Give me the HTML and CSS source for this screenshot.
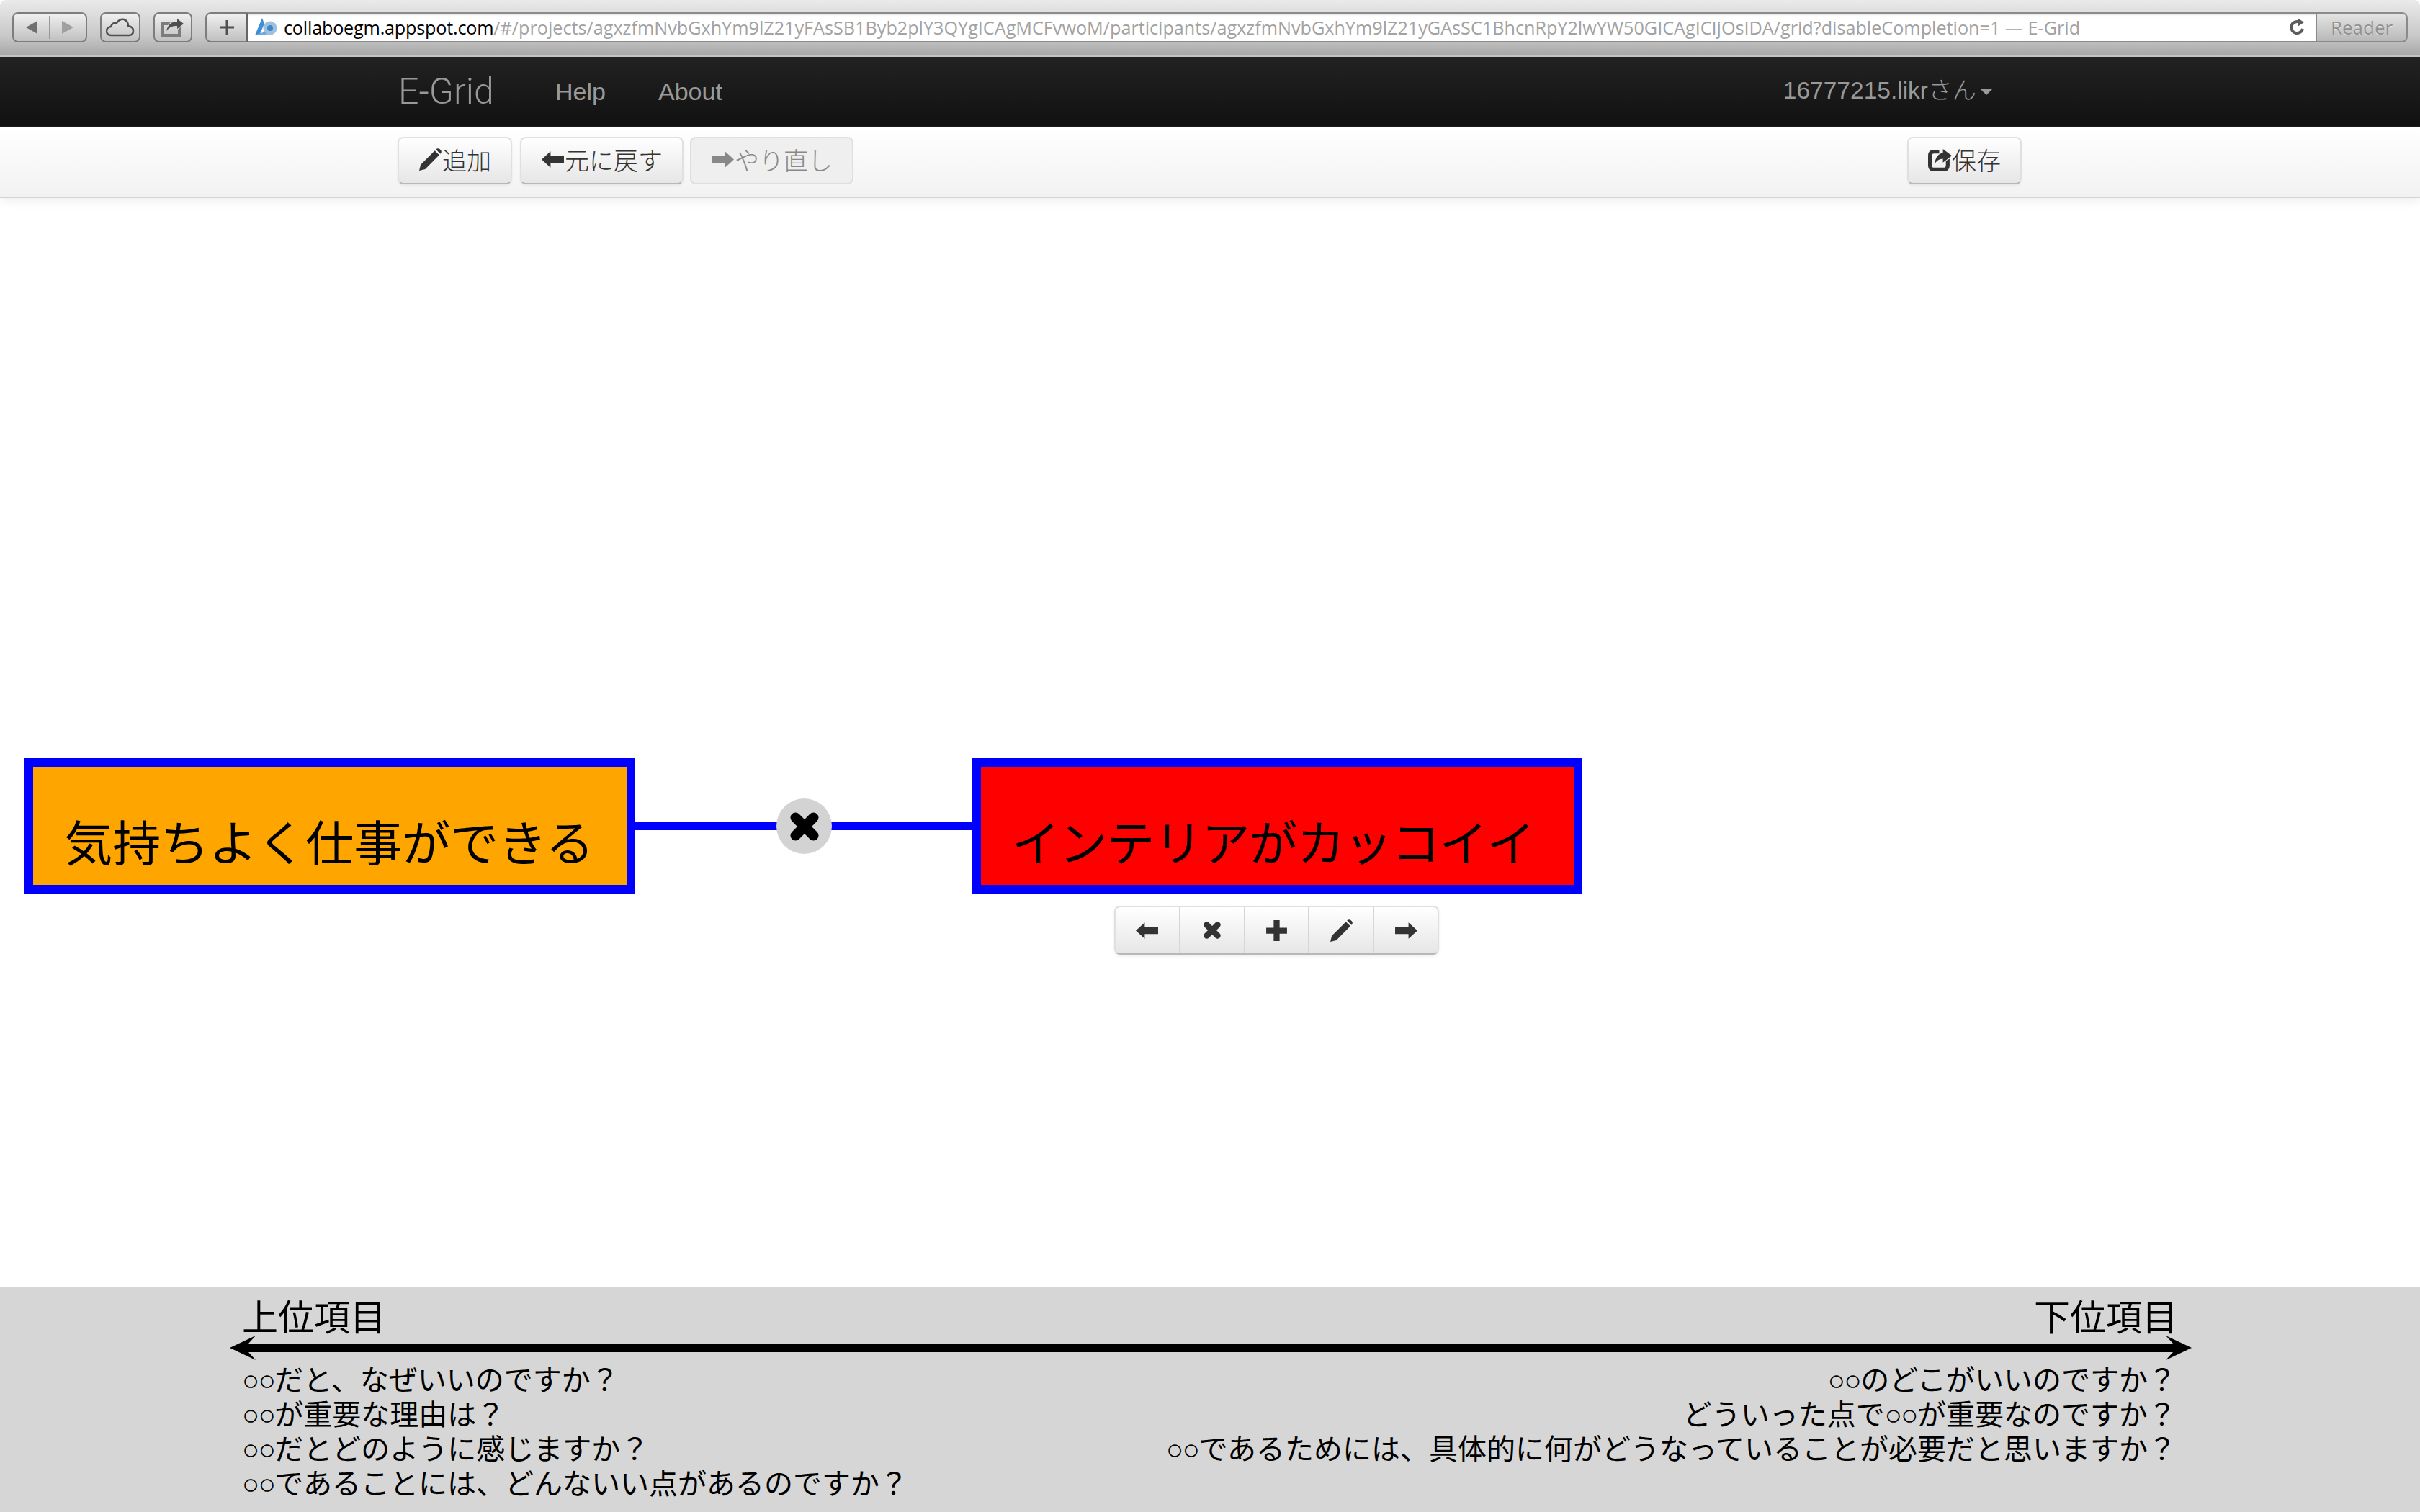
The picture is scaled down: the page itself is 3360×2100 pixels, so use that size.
FILE: index.html
```html
<!DOCTYPE html>
<html lang="ja">
<head>
<meta charset="utf-8">
<title>E-Grid</title>
<link rel="stylesheet" href="styles.css">
</head>
<body>
<svg class="sprites" width="0" height="0" aria-hidden="true">
  <symbol id="i-left" viewBox="0 0 32 32"><path d="M1 16 L13 5 V11.500 H31 V20.500 H13 V27 Z"/></symbol>
  <symbol id="i-right" viewBox="0 0 32 32"><path d="M31 16 L19 5 V11.500 H1 V20.500 H19 V27 Z"/></symbol>
  <symbol id="i-x" viewBox="0 0 32 32"><path d="M8 8 L24 24 M24 8 L8 24" fill="none" stroke="currentColor" stroke-width="9" stroke-linecap="round"/></symbol>
  <symbol id="i-plus" viewBox="0 0 32 32"><path d="M12 2 H20 V12 H30 V20 H20 V30 H12 V20 H2 V12 H12 Z"/></symbol>
  <symbol id="i-pencil" viewBox="0 0 32 32"><path d="M1 31 L3 23 L22 4 L28 10 L9 29 Z M23.500 2.500 Q26 0 28.500 2 L30 3.500 Q32 6 29.500 8.500 Z"/></symbol>
  <symbol id="i-share" viewBox="0 0 32 32"><path d="M24 18 V24 Q24 27 21 27 H8 Q5 27 5 24 V11 Q5 8 8 8 H15 V3 H8 Q0 3 0 11 V24 Q0 32 8 32 H21 Q29 32 29 24 V15 Z"/><path d="M20 2 L32 11 L20 20 V15 Q13 15 9 22 Q10 9 20 7 Z"/></symbol>
</svg>

<header class="chrome">
  <div class="chrome-btn seg">
    <svg class="tri" viewBox="0 0 18 20"><path d="M17 1 V19 L1 10 Z"/></svg>
    <span class="seg-line"></span>
    <svg class="tri tri-dim" viewBox="0 0 18 20"><path d="M1 1 V19 L17 10 Z"/></svg>
  </div>
  <div class="chrome-btn cloud">
    <svg viewBox="0 0 40 26" width="40" height="26"><path d="M8 24 Q1 24 1 18 Q1 13 7 12 Q9 6 15 7 Q19 1 25 2 Q31 4 31 11 Q38 12 38 18 Q38 24 32 24 Z" fill="none" stroke="#505050" stroke-width="2.500"/></svg>
  </div>
  <div class="chrome-btn share">
    <svg viewBox="0 0 34 26" width="34" height="26"><path d="M1 6 H14 L10 10 H5 V22 H24 V16 L28 12 V26 H1 Z" fill="#7c7c7c"/><path d="M32 8 L23 1 V5 Q11 5 8 18 Q14 10 23 11 V15 Z" fill="#505050"/></svg>
  </div>
  <div class="address">
    <div class="add-tab"><svg viewBox="0 0 20 20" width="20" height="20"><path d="M8.500 0 H11.500 V8.500 H20 V11.500 H11.500 V20 H8.500 V11.500 H0 V8.500 H8.500 Z" fill="#505050"/></svg></div>
    <div class="url">
      <svg class="favicon" viewBox="0 0 32 26" width="32" height="26"><path d="M10 0 L13 8 L7 22 L0 24 Z" fill="#3f8fd6"/><circle cx="21" cy="14" r="9.500" fill="#9dc0dc"/><circle cx="21" cy="14" r="4" fill="#3f84c4"/><path d="M0 24 H18 L14 19 Z" fill="#6fa8d8"/></svg>
      <span class="url-text"><span class="url-host">collaboegm.appspot.com</span>/#/projects/agxzfmNvbGxhYm9lZ21yFAsSB1Byb2plY3QYgICAgMCFvwoM/participants/agxzfmNvbGxhYm9lZ21yGAsSC1BhcnRpY2lwYW50GICAgICIjOsIDA/grid?disableCompletion=1 — E-Grid</span>
      <svg class="reload" viewBox="0 0 20 26" width="20" height="26"><path d="M13 6 A8 8 0 1 0 17 15" fill="none" stroke="#5c5c5c" stroke-width="4"/><path d="M10 0 L19 6 L10 12 Z" fill="#5c5c5c"/></svg>
    </div>
    <div class="reader">Reader</div>
  </div>
</header>

<nav class="navbar">
  <div class="nav-left">
    <span class="brand">E-Grid</span>
    <a class="nav-link help">Help</a>
    <a class="nav-link about">About</a>
  </div>
  <div class="nav-user">16777215.likrさん<span class="caret"></span></div>
</nav>

<div class="toolbar">
  <div class="tool-group">
    <button class="btn"><svg class="ico"><use href="#i-pencil"/></svg>追加</button>
    <button class="btn"><svg class="ico"><use href="#i-left"/></svg>元に戻す</button>
    <button class="btn btn-off"><svg class="ico"><use href="#i-right"/></svg>やり直し</button>
  </div>
  <button class="btn"><svg class="ico"><use href="#i-share"/></svg>保存</button>
</div>

<main class="canvas">
  <div class="link-line"></div>
  <div class="link-del"><svg class="del-x"><use href="#i-x"/></svg></div>
  <div class="node node-a">気持ちよく仕事ができる</div>
  <div class="node node-b">インテリアがカッコイイ</div>
  <div class="node-tools">
    <div class="nt"><svg class="ico"><use href="#i-left"/></svg></div>
    <div class="nt"><svg class="ico ico-s"><use href="#i-x"/></svg></div>
    <div class="nt"><svg class="ico"><use href="#i-plus"/></svg></div>
    <div class="nt"><svg class="ico"><use href="#i-pencil"/></svg></div>
    <div class="nt"><svg class="ico"><use href="#i-right"/></svg></div>
  </div>
</main>

<footer class="guide">
  <div class="guide-head">
    <div>上位項目</div>
    <div>下位項目</div>
  </div>
  <svg class="guide-arrow" viewBox="0 0 2724 34" preserveAspectRatio="none">
    <path d="M0 17 L36 0 L26 11 H2698 L2688 0 L2724 17 L2688 34 L2698 23 H26 L36 34 Z"/>
  </svg>
  <div class="guide-cols">
    <ul class="q-list q-left">
      <li><span class="ph">○○</span>だと、なぜいいのですか？</li>
      <li><span class="ph">○○</span>が重要な理由は？</li>
      <li><span class="ph">○○</span>だとどのように感じますか？</li>
      <li><span class="ph">○○</span>であることには、どんないい点があるのですか？</li>
    </ul>
    <ul class="q-list q-right">
      <li><span class="ph">○○</span>のどこがいいのですか？</li>
      <li>どういった点で<span class="ph">○○</span>が重要なのですか？</li>
      <li><span class="ph">○○</span>であるためには、具体的に何がどうなっていることが必要だと思いますか？</li>
    </ul>
  </div>
</footer>
</body>
</html>
```

FILE: styles.css
```css
* { box-sizing: border-box; }
html, body { margin: 0; height: 100%; background: #fff; }
body {
  width: 3360px; height: 2100px; overflow: hidden;
  display: flex; flex-direction: column;
  font-family: "Liberation Sans", "Noto Sans CJK JP", sans-serif;
}
.sprites { position: absolute; }

/* Browser chrome */
.chrome {
  height: 79px; flex: none; padding: 17px 17px 0;
  display: flex; align-items: flex-start;
  background: linear-gradient(#eaeaea 0, #e0e0e0 15px, #c8c8c8 50px, #a8a8a8 76px);
  border-bottom: 3px solid #c4c4c4;
  border-top-left-radius: 8px;
  border-top-right-radius: 8px;
}
.chrome-btn {
  height: 42px; border: 2px solid #7d7d7d; border-radius: 8px;
  display: flex; align-items: center; justify-content: center;
  background: linear-gradient(#f0f0f0, #c0c0c0);
}
.seg { width: 104px; margin-right: 18px; gap: 15px; }
.tri { width: 18px; height: 20px; fill: #6f6f6f; }
.tri-dim { fill: #a0a0a0; }
.seg-line { width: 2px; height: 32px; background: #999; }
.cloud { width: 56px; margin-right: 18px; }
.share { width: 54px; margin-right: 18px; }
.address { flex: 1; display: flex; height: 42px; min-width: 0; }
.add-tab {
  width: 59px; border: 2px solid #7d7d7d; border-right-color: #666; border-radius: 8px 0 0 8px;
  background: linear-gradient(#f0f0f0, #c0c0c0);
  display: flex; align-items: center; justify-content: center;
}
.url {
  flex: 1; min-width: 0; position: relative;
  display: flex; align-items: center; padding-left: 10px;
  background: #fff; border-top: 2px solid #8a8a8a; border-bottom: 2px solid #8a8a8a;
  box-shadow: inset 0 3px 3px -2px #ccc;
}
.favicon { flex: none; margin-right: 8px; }
.url-text {
  font-family: "Open Sans", sans-serif; font-size: 25.200px; color: #a2a2a2;
  white-space: nowrap; flex: 1; min-width: 0;
}
.url-host { color: #000; letter-spacing: -.2px; }
.reload { flex: none; margin-right: 15px; }
.reader {
  width: 128px; border: 2px solid #8a8a8a; border-radius: 0 8px 8px 0;
  background: linear-gradient(#e4e4e4, #b8b8b8);
  color: #919191; font-family: "Open Sans", sans-serif; font-size: 26px;
  display: flex; align-items: center; justify-content: center;
  text-shadow: 0 1px 0 #eee;
}

/* Navbar */
.navbar {
  height: 98px; flex: none; padding: 0 594px 0 553px;
  display: flex; align-items: center; justify-content: space-between;
  background: linear-gradient(#222, #111);
  border-bottom: 2px solid #1c1c1c;
  color: #999;
}
.nav-left { display: flex; align-items: center; }
.brand { font-family: Roboto, "Liberation Sans", sans-serif; font-weight: 300; font-size: 50px; width: 218px; }
.nav-link { font-size: 34px; }
.help { width: 143px; }
.nav-user { font-size: 33.500px; font-weight: 300; display: flex; align-items: center; transform: translateY(-5px); }
.caret {
  width: 0; height: 0; margin: 12px 0 0 6px;
  border-left: 8px solid transparent; border-right: 8px solid transparent; border-top: 8px solid #999;
}

/* Toolbar */
.toolbar {
  height: 98px; flex: none; padding: 13px 553px 0 552px;
  display: flex; justify-content: space-between; align-items: flex-start;
  background: linear-gradient(#fff, #f2f2f2);
  border-bottom: 2px solid #d4d4d4;
  box-shadow: 0 4px 14px rgba(0, 0, 0, .07);
  position: relative; z-index: 1;
}
.tool-group { display: flex; gap: 11px; }
.btn {
  height: 66px; padding: 0 27px 3px; font: inherit; font-size: 34px; font-weight: 300; color: #333;
  display: inline-flex; align-items: center;
  border: 2px solid #e0e0e0; border-bottom-color: #b8b8b8; border-radius: 8px;
  background: linear-gradient(#fff, #e6e6e6);
  box-shadow: 0 2px 3px rgba(0, 0, 0, .06);
}
.btn-off {
  background: #efefef; color: #888; box-shadow: none; border-color: #dedede; margin-left: -2px;
}
.ico { width: 33px; height: 33px; fill: currentColor; color: inherit; flex: none; }
.ico-s { width: 30px; height: 30px; }

/* Canvas: a free diagram */
.canvas { flex: 1; position: relative; }
.node {
  position: absolute; top: 778px; height: 188px;
  border: 12px solid #00f; color: #000;
  display: flex; align-items: center; justify-content: center;
  font-size: 67px; padding-top: 38px; white-space: nowrap;
}
.node-a { left: 34px; width: 848px; background: #ffa500; padding-right: 2px; }
.node-b { left: 1350px; width: 847px; background: #f00; letter-spacing: -1px; padding-right: 12px; }
.link-line { position: absolute; left: 882px; top: 866px; width: 468px; height: 12px; background: #00f; }
.link-del {
  position: absolute; left: 1078px; top: 834px; width: 77px; height: 77px; border-radius: 50%;
  background: #d3d3d3; display: flex; align-items: center; justify-content: center;
}
.del-x { width: 50px; height: 50px; color: #000; }
.node-tools {
  position: absolute; left: 1547px; top: 983px; width: 451px; height: 68px;
  display: flex; color: #333;
  border: 2px solid #e0e0e0; border-bottom-color: #b8b8b8; border-radius: 8px;
  background: linear-gradient(#fff, #e6e6e6);
  box-shadow: 0 2px 4px rgba(0, 0, 0, .08);
}
.nt {
  flex: 1; display: flex; align-items: center; justify-content: center;
  border-right: 2px solid #d6d6d6;
}
.nt:last-child { border-right: 0; }

/* Guide */
.guide {
  height: 312px; flex: none; padding: 0 338px;
  background: #d6d6d6; color: #000;
  display: flex; flex-direction: column;
}
.guide-head {
  display: flex; justify-content: space-between;
  font-size: 50px; line-height: 48px; padding-top: 19px;
  margin: 0 -2px 0 -2px;
}
.guide-arrow { width: 2724px; height: 34px; margin-left: -19px; flex: none; }
.guide-cols { display: flex; justify-content: space-between; padding-top: 4px; }
.q-list { list-style: none; margin: 0; padding: 0; font-size: 40px; line-height: 48px; }
.q-left { margin-left: -2px; }
.q-right { text-align: right; }
.ph { letter-spacing: -1.500px; }
```
